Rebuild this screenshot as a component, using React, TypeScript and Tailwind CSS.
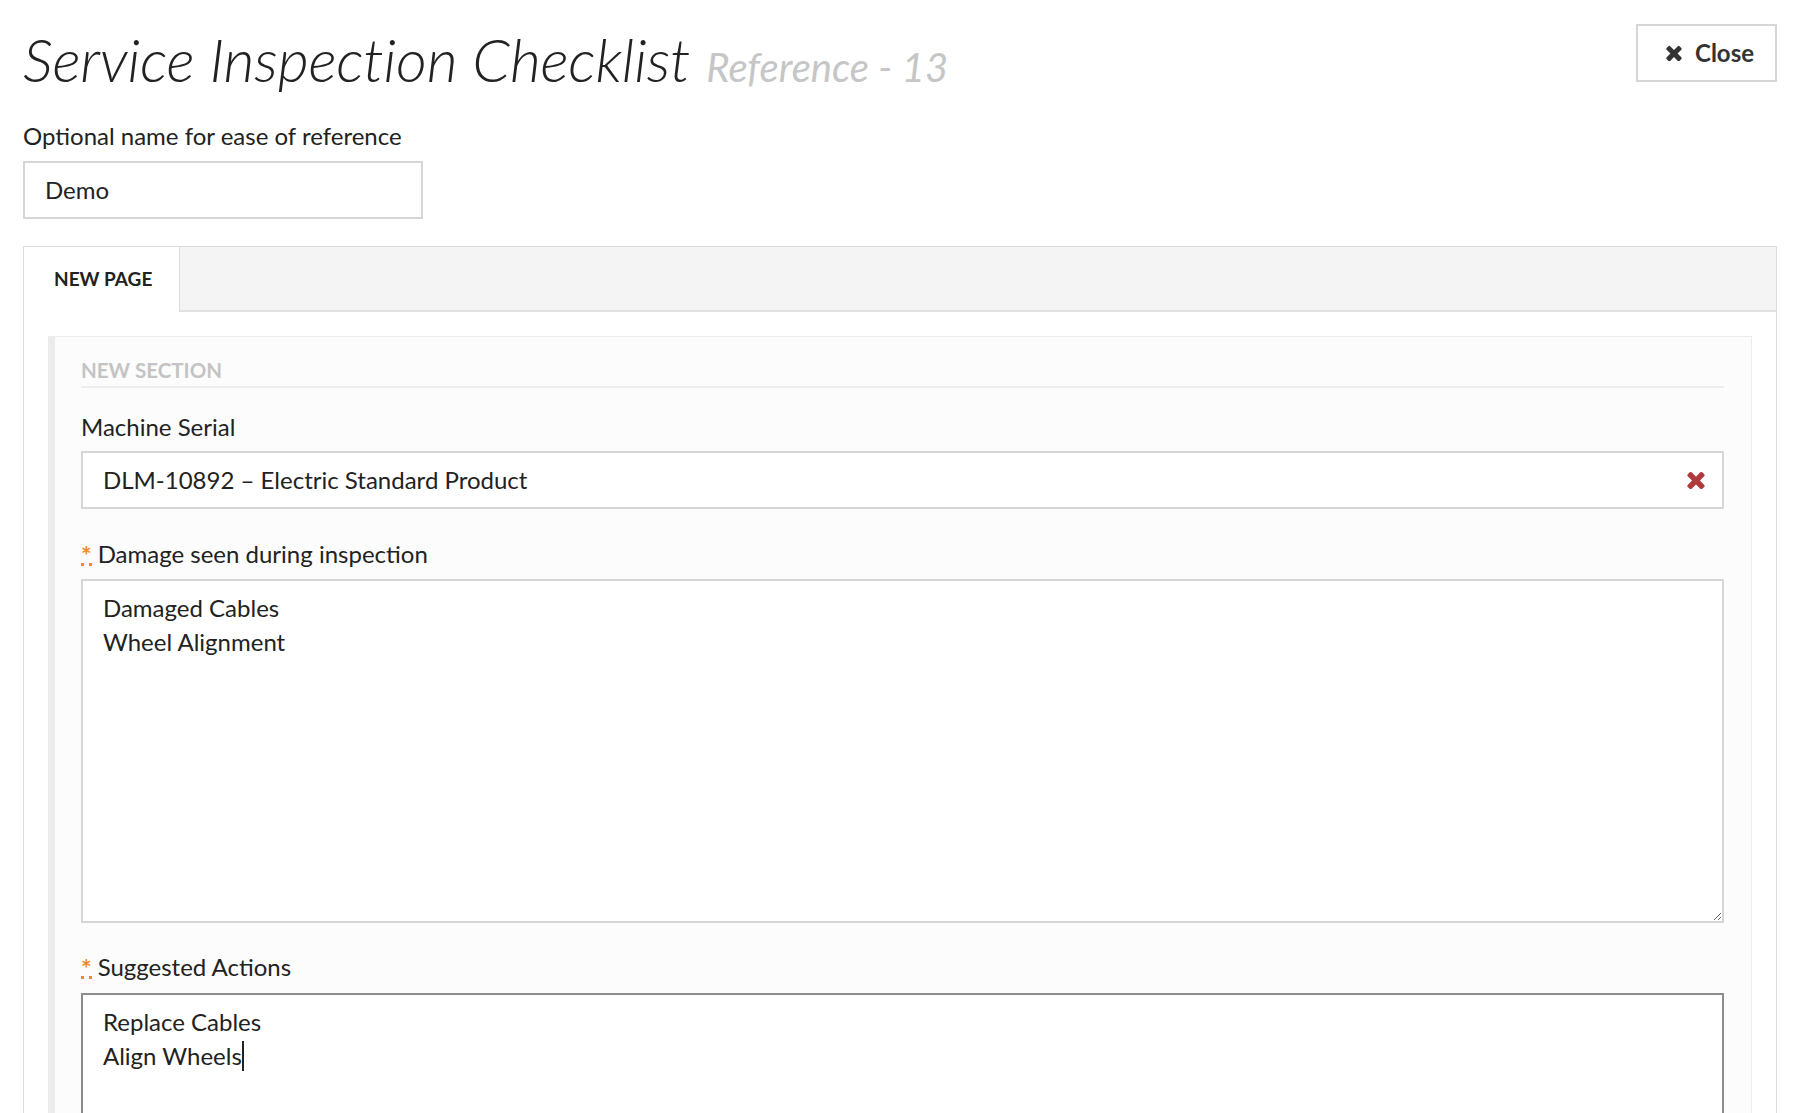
import React from "react";

const font = "font-['Lato','Liberation_Sans',sans-serif]";

// font-awesome style "times" glyph
function TimesIcon({ className }: { className?: string }) {
  return (
    <svg viewBox="105 300 1200 1235" className={className} fill="currentColor">
      <path d="M1298 1322q0 40-28 68l-136 136q-28 28-68 28t-68-28l-294-294-294 294q-28 28-68 28t-68-28l-136-136q-28-28-28-68t28-68l294-294-294-294q-28-28-28-68t28-68l136-136q28-28 68-28t68 28l294 294 294-294q28-28 68-28t68 28l136 136q28 28 28 68t-28 68l-294 294 294 294q28 28 28 68z" />
    </svg>
  );
}

function Required() {
  return (
    <abbr
      title="required"
      className="no-underline inline-block text-[25px] font-bold text-[#ee8a2a] border-b-[3px] border-dotted border-[#ee8a2a] leading-[16px] h-[19px] mr-[6px] align-top mt-[10px]"
    >
      *
    </abbr>
  );
}

export default function App() {
  return (
    <div className={`${font} min-h-screen w-full bg-white text-[#222] px-[23px] pt-[23px] pb-10`}>
      {/* header */}
      <div className="flex items-start justify-between">
        <h1 className="flex items-baseline leading-[72px]">
          <span className="text-[60px] font-light italic text-[#222] tracking-[-0.2px]">
            Service Inspection Checklist
          </span>
          <span className="ml-[16px] text-[40px] italic text-[#c6c6c6]">
            Reference - 13
          </span>
        </h1>
        <button className="mt-[1px] h-[58px] w-[141px] border-2 border-[#d6d6d6] bg-white flex items-center pl-[28px] gap-[13px] text-[24px] font-bold text-[#333]">
          <TimesIcon className="w-[16px] h-[16px]" />
          Close
        </button>
      </div>

      {/* name field */}
      <label className="block mt-[16px] text-[24px] leading-[33px] text-[#222]">
        Optional name for ease of reference
      </label>
      <div className="mt-[9px] w-[400px] h-[58px] border-2 border-[#d6d6d6] flex items-center px-[20px] text-[24px] text-[#222]">
        Demo
      </div>

      {/* tabs container */}
      <div className="mt-[27px] border border-[#dcdcdc]">
        <div className="flex h-[65px] bg-[#f4f4f4] border-b-2 border-[#e2e2e2]">
          <div className="bg-white h-[65px] w-[156px] border-r border-[#dcdcdc] flex items-center pl-[30px] text-[19px] font-bold text-[#222]">
            NEW PAGE
          </div>
        </div>

        <div className="p-[24px] pt-[24px]">
          <div className="bg-[#fcfcfc] border border-[#ececec] border-l-[7px] border-l-[#ececec] pl-[26px] pr-[27px] pt-[21px] pb-10">
            <div className="text-[20.5px] leading-[24px] font-bold text-[#c4c4c4] pb-[4px] border-b-2 border-[#ededed]">
              NEW SECTION
            </div>

            <label className="block mt-[22px] text-[24px] leading-[33px] text-[#222]">
              Machine Serial
            </label>
            <div className="mt-[8px] h-[58px] border-2 border-[#d6d6d6] bg-white flex items-center justify-between pl-[20px] pr-[17px] text-[24px] text-[#222]">
              <span>DLM-10892 – Electric Standard Product</span>
              <TimesIcon className="w-[18px] h-[18px] text-[#b0393b]" />
            </div>

            <label className="block mt-[28px] text-[24px] leading-[33px] text-[#222]">
              <Required />
              Damage seen during inspection
            </label>
            <textarea
              readOnly
              defaultValue={"Damaged Cables\nWheel Alignment"}
              className={`${font} block mt-[9px] w-full h-[344px] border-2 border-[#d6d6d6] bg-white px-[20px] pt-[10px] text-[24px] leading-[34px] text-[#222] outline-none resize-y`}
            />

            <label className="block mt-[27px] text-[24px] leading-[33px] text-[#222]">
              <Required />
              Suggested Actions
            </label>
            <div className="mt-[10px] h-[344px] border-2 border-[#8c8c8c] bg-white px-[20px] pt-[10px] text-[24px] leading-[34px] text-[#222]">
              <div>Replace Cables</div>
              <div className="flex items-center">
                Align Wheels
                <span className="inline-block w-[2px] h-[30px] bg-[#222]" />
              </div>
            </div>
          </div>
        </div>
      </div>
    </div>
  );
}
